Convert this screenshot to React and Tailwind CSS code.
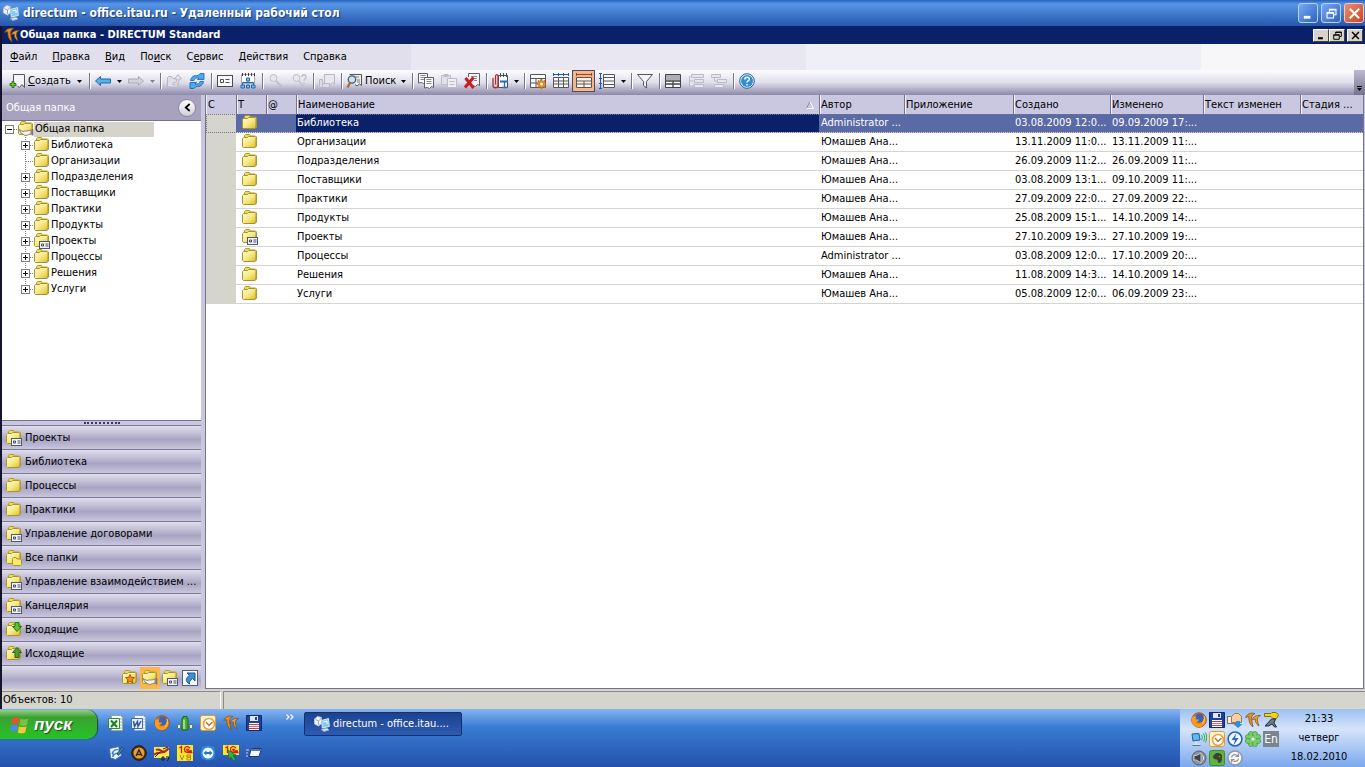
import { useState } from "react";

const FOLDERS = [
  { name: "Библиотека", author: "Administrator ...", created: "03.08.2009 12:0...", changed: "09.09.2009 17:..." },
  { name: "Организации", author: "Юмашев Ана...", created: "13.11.2009 11:0...", changed: "13.11.2009 11:...", leaf: true },
  { name: "Подразделения", author: "Юмашев Ана...", created: "26.09.2009 11:2...", changed: "26.09.2009 11:..." },
  { name: "Поставщики", author: "Юмашев Ана...", created: "03.08.2009 13:1...", changed: "09.10.2009 11:..." },
  { name: "Практики", author: "Юмашев Ана...", created: "27.09.2009 22:0...", changed: "27.09.2009 22:..." },
  { name: "Продукты", author: "Юмашев Ана...", created: "25.08.2009 15:1...", changed: "14.10.2009 14:..." },
  { name: "Проекты", author: "Юмашев Ана...", created: "27.10.2009 19:3...", changed: "27.10.2009 19:...", kind: "card" },
  { name: "Процессы", author: "Administrator ...", created: "03.08.2009 12:0...", changed: "17.10.2009 20:..." },
  { name: "Решения", author: "Юмашев Ана...", created: "11.08.2009 14:3...", changed: "14.10.2009 14:..." },
  { name: "Услуги", author: "Юмашев Ана...", created: "05.08.2009 12:0...", changed: "06.09.2009 23:..." },
];

const SHORTCUTS = [
  ["Проекты", "card"],
  ["Библиотека", "plain"],
  ["Процессы", "plain"],
  ["Практики", "plain"],
  ["Управление договорами", "card"],
  ["Все папки", "nested"],
  ["Управление взаимодействием ...", "card"],
  ["Канцелярия", "card"],
  ["Входящие", "in"],
  ["Исходящие", "out"],
];

// Each entry: text before the accelerator, the accelerator, the rest.
const MENU = [
  ["", "Ф", "айл"],
  ["", "П", "равка"],
  ["", "В", "ид"],
  ["По", "и", "ск"],
  ["С", "е", "рвис"],
  ["", "Д", "ействия"],
  ["Сп", "р", "авка"],
];

/* ---------- icons ---------- */

function Svg({ children, size = "h-4 w-4" }) {
  return (
    <svg viewBox="0 0 16 16" className={`${size} shrink-0`} fill="none" aria-hidden="true">
      {children}
    </svg>
  );
}

function Folder({ kind = "plain" }) {
  return (
    <Svg>
      <defs>
        <linearGradient id="folderFill" x1="0" y1="0" x2="1" y2="1">
          <stop offset="0" stopColor="#fffcd0" />
          <stop offset="0.5" stopColor="#f6e987" />
          <stop offset="1" stopColor="#dcbb25" />
        </linearGradient>
      </defs>
      <path d="M2.500 3.500V1.500l1-1h4l1 1.500h5l1 1v9l-1 1h-11z" fill="#ecd968" stroke="#b09d2e" />
      <path d="M.5 4.500l1-1h4l1-1h6.500l1 1v8.500l-1 1.500H1.500l-1-1z" fill="url(#folderFill)" stroke="#a8952a" />
      {kind === "card" && (
        <>
          <rect x="5.500" y="8.500" width="10" height="7" fill="#f2f2fa" stroke="#55576b" />
          <path d="M7.500 11h2v2h-2z" stroke="#444a68" />
          <path d="M11.500 11h3M11.500 13h3" stroke="#444a68" />
        </>
      )}
      {kind === "nested" && (
        <path d="M6.500 9.500V8.500l1-1h2.500l1 1.500h3.500l1 1v4.500l-1 1h-7l-1-1z" fill="#f7e774" stroke="#a8952a" />
      )}
      {kind === "in" && (
        <path d="M9 .5h4v4h2.500L11 9.500 6.500 4.500H9z" fill="#55c62e" stroke="#23751b" />
      )}
      {kind === "out" && (
        <path d="M9 11.500h4v-5h2.500L11 1.500 6.500 6.500H9z" fill="#4f9a3c" stroke="#23641b" />
      )}
      {kind === "star" && (
        <path d="M8 4.500l1.300 2.800 3.200.3-2.400 2.200.8 3.200L8 11.300 5.100 13l.8-3.200-2.400-2.200 3.200-.3z" fill="#f08a1c" stroke="#b25409" />
      )}
      {kind === "shared" && (
        <>
          <path d="M1 8.500l4 2c2-1 5 0 8-1.500v4c-2 0-3 1.500-6 1.500L3 12z" fill="#f4f1ea" stroke="#8b8575" />
          <path d="M14.500 8v6.500" stroke="#77778b" strokeWidth="1.800" />
        </>
      )}
    </Svg>
  );
}

function Computer() {
  return (
    <Svg>
      <path d="M7.500 4.500l7-2 .8 8-7 1.500z" fill="#7fcbf5" stroke="#d9eaf8" />
      <path d="M7 13.500l6-1.500 2 2-5 1.500z" fill="#dfe7ef" stroke="#8fa5bf" />
      <path d="M.5 3l3-2.500 4 1v6l-3 2.500-4-2z" fill="#f2f5f9" stroke="#b8c4d4" />
      <path d="M1.500 3.500l3 1.500v4M4.500 5l3-3" stroke="#94a8c0" />
      <path d="M9.500 6l3.500-1v3" stroke="#fff" />
    </Svg>
  );
}

function Directum() {
  return (
    <Svg>
      <path d="M.7 5.500C2 1.500 6 .5 10 1.500 7 2.500 6 5 6.800 8.500L8 15C5 13 3.500 9 3.800 4.800 2.500 4.800 1.500 5 .7 5.500z" fill="#e48f25" stroke="#7c4812" strokeWidth=".7" />
      <path d="M7.500 8c.5-3.500 4-5 8-4.500-2.500 1-3.500 2.500-3 5.500l1.500 5c-2.500-1.500-4-4-3.700-7-1.200 0-2 .3-2.800 1z" fill="#e9a03a" stroke="#7c4812" strokeWidth=".7" />
    </Svg>
  );
}

function Floppy() {
  return (
    <Svg>
      <path d="M.5.5h15v15H.5z" fill="#1d3f9f" stroke="#142766" />
      <path d="M4 1h8v5H4z" fill="#dfe6f4" />
      <path d="M9 2h2v3H9z" fill="#1d3f9f" />
      <path d="M3 8h10v7H3z" fill="#fff" />
      <path d="M3 9.500h10M3 13.500h10" stroke="#cf3a3a" />
      <path d="M3 11.500h10" stroke="#d87070" />
    </Svg>
  );
}

function Firefox() {
  return (
    <Svg>
      <circle cx="8" cy="8" r="7.300" fill="#e8751a" stroke="#a3430c" strokeWidth=".8" />
      <circle cx="8.500" cy="6" r="4.500" fill="#3b64b8" />
      <path d="M1.500 4c1 1 2 .5 4 .5L4.500 7c1 1 3 0 3.500 1-1 2-3 1.500-3.500 2.500 3 2.500 7 1 8-3l1-3c2 4 1 9-4 10.500C4 16 0 12 1 7z" fill="#f59b1d" />
      <path d="M13 4c1 3 .5 6-2 7.500" stroke="#ffd34f" />
    </Svg>
  );
}

function Outlook() {
  return (
    <Svg>
      <rect x=".5" y=".5" width="15" height="15" rx="2" fill="#fff3c9" stroke="#e09a2d" />
      <circle cx="9" cy="9" r="5.500" fill="#fff" stroke="#e5a03c" strokeWidth="1.500" />
      <path d="M6 7l3 3.500L12.500 7" stroke="#b6741e" strokeWidth="1.300" />
    </Svg>
  );
}

function Excel() {
  return (
    <Svg>
      <path d="M3.500.5h9l2 2v13h-11z" fill="#fff" stroke="#94a894" />
      <path d="M10 4h4M10 7h4M10 10h4M10 13h4" stroke="#8fc08f" />
      <path d="M.5 3.500h11v10H.5z" fill="#e7f6e7" stroke="#2e8b3a" />
      <path d="M3 5.500l6 6.500M9 5.500L3 12" stroke="#1f7c2e" strokeWidth="2" />
    </Svg>
  );
}

function Word() {
  return (
    <Svg>
      <path d="M3.500.5h9l2 2v13h-11z" fill="#fff" stroke="#8fa0c4" />
      <path d="M10 4h4M10 7h4M10 10h4M10 13h4" stroke="#9db4e0" />
      <path d="M.5 3.500h11v10H.5z" fill="#eaf1fd" stroke="#4069b5" />
      <path d="M2.500 6l1 5.500 3-5 .5 5L10 6" stroke="#2b55a8" strokeWidth="1.500" />
    </Svg>
  );
}

function Battery() {
  return (
    <Svg>
      <path d="M6 1.500h4v2h1v11.500H5V3.500h1z" fill="#49ad35" stroke="#236b17" />
      <path d="M7 4.500v9.500" stroke="#b6f09a" strokeWidth="1.500" />
      <path d="M.5 9.500h3v4h-3zM12.500 9.500h3v4h-3z" fill="#e2eae2" stroke="#5b7b63" />
    </Svg>
  );
}

function Notes() {
  return (
    <Svg>
      <path d="M1.500 3.500l9-2 3 9-6 4-5-1.500z" fill="#eaf4ff" stroke="#376fa9" />
      <path d="M4 9c1-4 4-5 7-4M4.500 11.500c2-3 4-4 7-3M5 6v6" stroke="#387fbf" strokeWidth="1.300" />
      <path d="M9 9l5-7 1.500 1.500-5 7z" fill="#4f80b0" stroke="#244d77" />
    </Svg>
  );
}

function RoundA() {
  return (
    <Svg>
      <circle cx="8" cy="8" r="7.300" fill="#43321b" stroke="#24180a" />
      <circle cx="8" cy="8" r="5.500" fill="#e9a32c" />
      <path d="M5 11l3-6 3 6M6 9.500h4" stroke="#3a260b" strokeWidth="1.500" />
    </Svg>
  );
}

function Seven() {
  return (
    <Svg>
      <path d="M0 2h15v11H0z" fill="#ffe94a" />
      <path d="M0 10C4 5 8 11 15 3M2 5c4-2 6 3 9 2" stroke="#a82929" strokeWidth="2" />
      <path d="M1 12l5-5M9 4l5-2" stroke="#282828" />
      <path d="M8 12h2v3H8zM12 12h3l-1.500 4" stroke="#171717" />
    </Svg>
  );
}

function OneC({ arrow }) {
  return (
    <Svg>
      <path d={arrow ? "M0 0h16v10H0z" : "M0 0h16v16H0z"} fill="#ffe42e" />
      <path d="M2.500 3L4.500 1.500V8M13 3C11 .5 7.500 1.500 7.500 4.500s2 3 8 3M12 4.500c-3-1.500-3 1.500 0 1.500h3" stroke="#d41d16" strokeWidth="1.300" />
      {arrow ? (
        <path d="M5 5l8 5-3 .5 2.500 4-2 1.500-2.500-4L6 14z" fill="#35b33c" stroke="#1b6b22" strokeWidth=".7" />
      ) : (
        <path d="M3 10l2 5 2-5M10 10h3.500v2H10zM10 12.500h3.500V15H10z" stroke="#b38a0f" />
      )}
    </Svg>
  );
}

function Viewer() {
  return (
    <Svg>
      <path d="M2 2l6-1.500L14 2l1.500 6-1.500 6-6 1.500L2 14 .5 8z" fill="#2e88d6" />
      <circle cx="8" cy="8" r="5.500" fill="#f1f8ff" />
      <path d="M3.500 8l3-2.500v1.500h3V5.500l3 2.500-3 2.500V9h-3v1.500z" fill="#1f75c5" />
    </Svg>
  );
}

function RunWindow() {
  return (
    <Svg>
      <path d="M5.500 3.500h10l-2.500 8H3z" fill="#f3f7fc" stroke="#26385c" />
      <path d="M5.500 5h9.500" stroke="#4979c6" strokeWidth="2" />
      <path d="M0 5h3M0 8h2M0 11h2" stroke="#c3d5f0" />
    </Svg>
  );
}

function FlagWin() {
  return (
    <Svg size="h-5 w-5">
      <path d="M2 2.500c2-1 4-1 5.500 0L6.500 7.500C5 6.500 3 6.500 1 7.500z" fill="#e8532a" />
      <path d="M8.500 2.800c2 1 4 1 6 0L13.500 8c-2 1-4 1-6 0z" fill="#7cc242" />
      <path d="M.8 8.500c2-1 4-1 5.500 0L5.200 13.500c-1.500-1-3.500-1-5.200 0z" fill="#4b8be8" />
      <path d="M7.200 8.900c2 1 4 1 6 0l-1 5c-2 1-4 1-6 0z" fill="#f8c832" />
    </Svg>
  );
}

function Clip16() {
  return (
    <Svg>
      <rect x=".5" y="4.500" width="8" height="7" fill="#ededf2" stroke="#8e6d4c" />
      <path d="M4.500 4.500l3-3h4l3 3v6h-10z" fill="#f3cfa6" stroke="#b2713a" />
      <path d="M9 9h4v3h2.500L11 16l-4.500-4H9z" fill="#2891dd" />
    </Svg>
  );
}

function Key() {
  return (
    <Svg>
      <path d="M1.500 1.500H8l1-1h4l2.500 2.500-2 3.500H10L8 4.500H1.500z" fill="#f2d21c" stroke="#84710b" />
      <path d="M8.500 7h4l-1.500 4 2.500 4h-2l-2.500-3-3.500 2H2z" fill="#6f7983" stroke="#252c33" />
    </Svg>
  );
}

function NetWave() {
  return (
    <Svg>
      <path d="M1 3l7-.5 1 6.500-7 1z" fill="#63b6ee" stroke="#235f98" />
      <path d="M5 10v3M2 13.500h7" stroke="#d3e1ef" strokeWidth="2" />
      <path d="M1.500 14.500h8" stroke="#4d78a3" />
      <path d="M10.500 4c1 1.500 1 3 0 5M12.500 2.500c1.500 2.500 1.500 5 0 8M14.500 1.500c1.500 3 1.500 7 0 10" stroke="#2fae42" />
    </Svg>
  );
}

function Bolt() {
  return (
    <Svg>
      <circle cx="8" cy="8" r="6.900" fill="#f2f7ff" stroke="#2b61b5" strokeWidth="1.500" />
      <path d="M9.500 2L4.500 9H8l-1.500 5.500L11.500 7H8z" fill="#2668c8" />
    </Svg>
  );
}

function Flower() {
  return (
    <Svg>
      <g fill="#7ccb6c" stroke="#35913a" strokeWidth=".6">
        <circle cx="6" cy="3" r="2.600" />
        <circle cx="10" cy="3" r="2.600" />
        <circle cx="6" cy="13" r="2.600" />
        <circle cx="10" cy="13" r="2.600" />
        <circle cx="3" cy="6" r="2.600" />
        <circle cx="3" cy="10" r="2.600" />
        <circle cx="13" cy="6" r="2.600" />
        <circle cx="13" cy="10" r="2.600" />
      </g>
      <path d="M8 8L5 4M8 8l3-4M8 8L4 5M8 8l-4 3M8 8l4-3M8 8l4 3M8 8l-3 4M8 8l3 4" stroke="#7ccb6c" strokeWidth="2" />
      <circle cx="8" cy="8" r="1.500" fill="#e7f6d4" />
    </Svg>
  );
}

function Speaker() {
  return (
    <Svg>
      <circle cx="8" cy="8" r="7" fill="#8d929b" stroke="#5b616a" />
      <path d="M3 5.500h2.500L10 3v10L5.500 10H3z" fill="#3d4149" stroke="#c6cad1" />
      <path d="M11.500 5.500c1.500 1.500 1.500 3.500 0 5" stroke="#f0f1f4" />
    </Svg>
  );
}

function Evernote() {
  return (
    <Svg>
      <rect x=".5" y=".5" width="15" height="15" rx="2" fill="#62b33d" stroke="#468b2c" />
      <path d="M4 6l3-3c3 0 6 .5 6 3 0 3 0 7-2.500 7-2 0-2-2-1-2.500-2 .5-2-1-2-1.500-2 1-3.500-.5-3.500-3z" fill="#3b4238" />
      <circle cx="10.500" cy="6.500" r=".8" fill="#62b33d" />
    </Svg>
  );
}

function Sync() {
  return (
    <Svg>
      <circle cx="8" cy="8" r="7" fill="#f7f7f9" stroke="#93979f" strokeWidth="1.500" />
      <path d="M4.500 7.500C5 4.500 9 3.500 11 6M11.500 3.500V6.500H8.500M11.500 8.500C11 11.500 7 12.500 5 10M4.500 12.500v-3h3" stroke="#8b9099" strokeWidth="1.200" />
    </Svg>
  );
}

/* toolbar glyphs, drawn on the same 16px grid */
const GLYPHS = {
  create: (
    <>
      <path d="M4.500 8V1.500h11v13l-2.500-3-2.500 3-2-1.500" fill="#f4f4f8" stroke="#55565c" />
      <path d="M3 8.500h2v2h2v2H5v2H3v-2H1v-2h2z" fill="#66c636" stroke="#2e7a1c" />
    </>
  ),
  back: <path d="M.5 8l5-4.500v2.500h10v4h-10v2.500z" fill="#57b2ec" stroke="#1f65a8" />,
  forward: <path d="M15.500 8l-5-4.500v2.500H.5v4h10v2.500z" fill="#d3d2dc" stroke="#a9a8b4" />,
  up: (
    <>
      <path d="M1.500 4.500l1-1h3l1.500 2h5v8.500h-10.500z" fill="#dfdee7" stroke="#b6b5c2" />
      <path d="M7 10c3 0 4-1 4-4H8.500L12 1.500 15.500 6H13c0 4-2 6-6 6z" fill="#e7e6ee" stroke="#b6b5c2" />
    </>
  ),
  refresh: (
    <>
      <path d="M1.500 7.500C2 4 5 2 9 2.500l2-2h4v6H8.500l1.500-1.500C7 4.500 5.500 5.500 5 7.500z" fill="#4aaaf0" stroke="#1a5faa" strokeWidth=".8" />
      <path d="M14.500 8.500C14 12 11 14 7 13.500l-2 2H1v-6h6.500L6 11c3 .5 4.500-.5 5-2.500z" fill="#4aaaf0" stroke="#1a5faa" strokeWidth=".8" />
    </>
  ),
  card: (
    <>
      <rect x=".5" y="2.500" width="15" height="11" fill="#fafafc" stroke="#4c4c54" />
      <path d="M3.500 6.500h3v3h-3zM8.500 6.500h4M8.500 9.500h4" stroke="#4c4c54" />
    </>
  ),
  org: (
    <>
      <path d="M1.500 1.500h13v9h-13z" fill="#fff" stroke="#a8a8b4" />
      <path d="M2.500 0v3M5.500 0v3M8.500 0v3M11.500 0v3M14.500 0v3" stroke="#3c3c44" />
      <path d="M8 7v3M2.500 12V9.500h11V12" stroke="#2667a8" />
      <path d="M6.500 5h3v3h-3zM1 12h3.500v3H1zM6.500 12h3v3h-3zM11.500 12H15v3h-3.500z" fill="#6fc0f4" stroke="#2667a8" />
    </>
  ),
  find: (
    <>
      <circle cx="5.500" cy="5" r="3.500" fill="#e7e6ee" stroke="#c0bfcb" />
      <path d="M8 8l6 6" stroke="#c0bfcb" strokeWidth="2" />
    </>
  ),
  findNext: (
    <>
      <circle cx="5.500" cy="5" r="3.500" fill="#e7e6ee" stroke="#c0bfcb" />
      <path d="M8 8l5 6M11 4c0-3 4-3 4 0 0 2-2 1.500-2 4M13 9.500V11" stroke="#c0bfcb" strokeWidth="1.500" />
    </>
  ),
  stack: (
    <>
      <path d="M5.500 1.500h10v9l-2-1-2 2-2-1h-4z" fill="#e9e8f0" stroke="#b9b8c4" />
      <path d="M.5 6.500h3v8h-3zM3.500 10.500h7v4h-7z" fill="#dddce6" stroke="#b9b8c4" />
    </>
  ),
  search: (
    <>
      <path d="M3.500 1.500h12v11l-2-1.500-2.500 2-2-1.500" fill="#eee" stroke="#55565c" />
      <path d="M8 4h5M11 7h3M11 9h3" stroke="#77787e" />
      <circle cx="6" cy="6.500" r="3.700" fill="#c9e5f4" stroke="#50565f" strokeWidth="1.300" />
      <path d="M4 10l-2.500 4.500" stroke="#b66a32" strokeWidth="2.500" />
    </>
  ),
  copy: (
    <>
      <path d="M.5.500h9v9l-2-1-2 2-2-1-3 .5z" fill="#fafafc" stroke="#5d5e66" />
      <path d="M2.500 2.500h5M2.500 4.500h5M2.500 6.500h5" stroke="#85868e" />
      <path d="M6.500 4.500h9v10l-2-1-2 2-2-1-3 .5z" fill="#fafafc" stroke="#5d5e66" />
      <path d="M8.500 6.500h5M8.500 8.500h5M8.500 10.500h5" stroke="#85868e" />
    </>
  ),
  paste: (
    <>
      <path d="M.5 2.500h9v9h-9z" fill="#e2e1ea" stroke="#bcbbc6" />
      <path d="M3 1.500h4v2H3z" stroke="#bcbbc6" />
      <path d="M6.500 5.500h9v9h-9zM8.500 8.500h5M8.500 11.500h5" fill="#efeef4" stroke="#bcbbc6" />
    </>
  ),
  remove: (
    <>
      <path d="M4.500 4V.5h11v12l-2-1-2 2-3-1" fill="#f6f6fa" stroke="#5d5e66" />
      <path d="M7 3.500h6M9 5.500h4M10 7.500h3" stroke="#85868e" />
      <path d="M1.500 5l8 10M9.500 4.500L1 14.500" stroke="#cc1c1c" strokeWidth="3" />
    </>
  ),
  attach: (
    <>
      <path d="M6.500 2.500h9v12h-9zM8.500 0v4M11.500 0v4M14.500 0v4" fill="#fafafc" stroke="#4c4c54" />
      <path d="M1 5v7.500c0 3 5 3 5 0V3.500C6 1 3.500 1 3.500 3.500v8" stroke="#a83232" strokeWidth="1.300" />
      <path d="M8 8.500h8" stroke="#276db3" strokeWidth="2" />
      <path d="M12.500 9v5M10 14.500h5" stroke="#276db3" strokeWidth="1.300" />
    </>
  ),
  tableGear: (
    <>
      <path d="M.5 1.500h15v13H.5zM.5 5.500h15M.5 10h15M6 5v9M11 5v9" fill="#fafafc" stroke="#55565c" />
      <path d="M11.500 6v10M6.500 11h10M8 7.500l7 7M15 7.500l-7 7" stroke="#c87417" strokeWidth="1.800" />
      <circle cx="11.500" cy="11" r="2.500" fill="#fff" stroke="#dc8b25" strokeWidth="2" />
    </>
  ),
  fitColumns: (
    <>
      <path d="M.5 4.500h15v10H.5zM.5 8h15M.5 11h15M5.500 5v9M10.500 5v9" fill="#fafafc" stroke="#55565c" />
      <path d="M0 1.500h16M.5 0v3M5.500 0v3M10.500 0v3M15.500 0v3" stroke="#2159a3" />
    </>
  ),
  fitWidth: (
    <>
      <path d="M.5 4.500h15v10H.5zM.5 8h15M.5 11h15M8 8v6" fill="#fff4e4" stroke="#55565c" />
      <path d="M0 1.500h16M.5 0v3M15.500 0v3" stroke="#a83a2e" />
    </>
  ),
  rowHeight: (
    <>
      <path d="M4.500 1.500h11v13h-11zM4.500 4.500h11M4.500 8h11M4.500 11.500h11" fill="#fafafc" stroke="#55565c" />
      <path d="M1.500 0v16M0 .5h3M0 5.500h3M0 10.500h3M0 15.500h3" stroke="#2159a3" />
    </>
  ),
  filter: <path d="M.5 1.500h15l-6 7v6.500l-3-2.500v-4z" fill="#f4f4f8" stroke="#55565c" />,
  preview: (
    <>
      <path d="M.5 1.500h15v13H.5z" fill="#fafafc" stroke="#44454b" />
      <path d="M1 2h14v5H1z" fill="#aeaeb8" />
      <path d="M.5 8h15M.5 11h15M8 8v6" stroke="#44454b" strokeWidth="1.300" />
    </>
  ),
  tree1: <path d="M3.500 1.500h12v3h-12zM6.500 6.500h9v3h-9zM6.500 11.500h9v3h-9zM1.500 3v10h4M1.500 8h4" fill="#e7e6ee" stroke="#bab9c6" />,
  tree2: <path d="M.5 1.500h9v3h-9zM6.500 6.500h9v3h-9zM3.500 11.500h9v3h-9zM3.500 5v3h3" fill="#e7e6ee" stroke="#bab9c6" />,
  help: (
    <>
      <circle cx="8" cy="8" r="7.300" fill="#f2f8fd" stroke="#2a5c94" />
      <circle cx="8" cy="8" r="6" fill="#2c8fd8" />
      <path d="M5.800 6.500c0-3 4.500-3 4.500-.3C10.300 8 8 7.800 8 9.500M8 11v1.500" stroke="#fff" strokeWidth="1.500" />
    </>
  ),
};

/* ---------- toolbar parts ---------- */

function Tool({ icon, label, active, disabled }) {
  return (
    <button
      type="button"
      aria-label={label}
      disabled={disabled}
      className={`flex h-[22px] w-[23px] shrink-0 items-center justify-center ${
        active ? "border border-[#4a4a6a] bg-[#f5b884]" : ""
      }`}
    >
      <Svg>{GLYPHS[icon]}</Svg>
    </button>
  );
}

function Caret({ dim }) {
  return (
    <svg viewBox="0 0 5 3" className={`h-[3px] w-[5px] shrink-0 ${dim ? "text-[#85838f]" : "text-black"}`} aria-hidden="true">
      <path d="M0 0h5L2.500 3z" fill="currentColor" />
    </svg>
  );
}

function Drop({ label, dim }) {
  return (
    <button type="button" aria-label={label} className="flex h-[22px] w-[10px] shrink-0 items-center justify-center">
      <Caret dim={dim} />
    </button>
  );
}

function Sep() {
  return <span className="mr-px ml-[3px] h-4 w-px shrink-0 bg-[#77748f] shadow-[1px_0_0_#fff]" />;
}

function Toolbar() {
  return (
    <div className="flex h-[25px] items-stretch bg-linear-to-b from-[#fdfdfe] via-[#e0dfec] to-[#8d89a8]">
      <div className="flex grow items-center overflow-hidden pb-[3px] pl-[4px]">
        <button type="button" className="flex shrink-0 items-center">
          <span className="flex w-[22px] justify-center">
            <Svg>{GLYPHS.create}</Svg>
          </span>
          <span className="w-11 text-left">
            <u>С</u>оздать
          </span>
          <span className="flex w-[14px] justify-center">
            <Caret />
          </span>
        </button>
        <Sep />
        <Tool icon="back" label="Назад" />
        <Drop label="Назад: список" />
        <Tool icon="forward" label="Вперед" disabled />
        <Drop label="Вперед: список" dim />
        <Sep />
        <Tool icon="up" label="На уровень вверх" disabled />
        <Tool icon="refresh" label="Обновить" />
        <Sep />
        <Tool icon="card" label="Карточка" />
        <Tool icon="org" label="Структура" />
        <Sep />
        <Tool icon="find" label="Найти" disabled />
        <Tool icon="findNext" label="Найти далее" disabled />
        <Sep />
        <Tool icon="stack" label="Задачи" disabled />
        <Sep />
        <button type="button" className="flex shrink-0 items-center">
          <span className="flex w-[22px] justify-center">
            <Svg>{GLYPHS.search}</Svg>
          </span>
          <span className="w-8 text-left">Поиск</span>
          <span className="flex w-3 justify-center">
            <Caret />
          </span>
        </button>
        <Sep />
        <Tool icon="copy" label="Копировать" />
        <Tool icon="paste" label="Вставить" disabled />
        <Tool icon="remove" label="Удалить" />
        <Sep />
        <Tool icon="attach" label="Вложения" />
        <Drop label="Вложения: список" />
        <Sep />
        <Tool icon="tableGear" label="Настройка таблицы" />
        <Tool icon="fitColumns" label="Ширина колонок" />
        <Tool icon="fitWidth" label="По ширине окна" active />
        <Tool icon="rowHeight" label="Высота строк" />
        <Drop label="Высота строк: список" />
        <Sep />
        <Tool icon="filter" label="Фильтр" />
        <Sep />
        <Tool icon="preview" label="Просмотр" />
        <Tool icon="tree1" label="Развернуть" disabled />
        <Tool icon="tree2" label="Свернуть" disabled />
        <Sep />
        <Tool icon="help" label="Помощь" />
      </div>
      <button
        type="button"
        aria-label="Другие кнопки"
        className="flex w-[11px] shrink-0 flex-col items-center justify-end gap-px bg-linear-to-b from-[#bdbbd0] to-[#77738f] pb-1"
      >
        <span className="h-px w-[5px] bg-black" />
        <Caret />
      </button>
    </div>
  );
}

/* ---------- window frames ---------- */

function WindowGlyph({ kind, size }) {
  return (
    <Svg size={size}>
      {kind === "min" && <path d="M3 12h7" stroke="currentColor" strokeWidth="3" />}
      {kind === "restore" && (
        <path d="M5.500 6V3h8v6.500H11M2.500 7h8v6.500h-8zM5 3.500h9M2 7.500h9" stroke="currentColor" strokeWidth="1.400" />
      )}
      {kind === "close" && <path d="M3 3l10 10M13 3L3 13" stroke="currentColor" strokeWidth="2.200" />}
    </Svg>
  );
}

function RemoteTitle() {
  return (
    <header className="flex h-[26px] items-center bg-linear-to-b from-[#2a62bd] via-[#5796e6] via-15% to-[#2656ab] pr-px pl-[3px] text-white">
      <Computer />
      <h1 className="ml-1 grow truncate text-[12px] font-bold [text-shadow:1px_1px_1px_#16387a]">
        directum - office.itau.ru - Удаленный рабочий стол
      </h1>
      <div className="flex gap-[3px]">
        <button type="button" aria-label="Свернуть окно" className="flex h-5 w-5 items-center justify-center rounded-[3px] border border-[#b9d3fa] bg-linear-to-br from-[#77aaf2] to-[#2e63c0]">
          <WindowGlyph kind="min" size="h-[15px] w-[15px]" />
        </button>
        <button type="button" aria-label="Восстановить окно" className="flex h-5 w-5 items-center justify-center rounded-[3px] border border-[#b9d3fa] bg-linear-to-br from-[#77aaf2] to-[#2e63c0]">
          <WindowGlyph kind="restore" size="h-[13px] w-[13px]" />
        </button>
        <button type="button" aria-label="Закрыть окно" className="flex h-5 w-5 items-center justify-center rounded-[3px] border border-[#f4c9bd] bg-linear-to-br from-[#ec8d72] to-[#c8431f]">
          <WindowGlyph kind="close" size="h-[15px] w-[15px]" />
        </button>
      </div>
    </header>
  );
}

function AppTitle() {
  return (
    <div className="flex h-[18px] items-center bg-[#0a216a] pr-[2px] pl-[2px] text-white">
      <Directum />
      <h2 className="grow truncate font-bold">Общая папка - DIRECTUM Standard</h2>
      <div className="flex text-black">
        {[
          ["min", "Свернуть"],
          ["restore", "Восстановить"],
          ["close", "Закрыть"],
        ].map(([kind, label]) => (
          <button
            key={kind}
            type="button"
            aria-label={label}
            className="flex h-[13px] w-4 items-center justify-center border border-t-white border-r-[#404040] border-b-[#404040] border-l-white bg-[#d6d3cb] last:ml-[2px]"
          >
            <WindowGlyph kind={kind} size="h-[11px] w-[11px]" />
          </button>
        ))}
      </div>
    </div>
  );
}

function MenuBar() {
  return (
    <nav className="flex h-[26px] items-center gap-[15px] bg-[linear-gradient(to_right,#e1dfeb_30%,#e9e8f2_30%,#e9e8f2_59%,#efeff7_59%,#efeff7_88%,#f7f7f9_88%)] pl-[8px]">
      {MENU.map(([before, key, after]) => (
        <button key={before + key} type="button">
          {before}
          <u>{key}</u>
          {after}
        </button>
      ))}
    </nav>
  );
}

/* ---------- left panel ---------- */

function Expander({ open, leaf, last }) {
  return (
    <svg viewBox="0 0 13 16" className="h-4 w-[13px] shrink-0" fill="none" aria-hidden="true">
      {!open && <path d={last ? "M4.500 0v8" : "M4.500 0v16"} stroke="#808080" strokeDasharray="1 1" />}
      <path d="M5 8.500h8" stroke="#808080" strokeDasharray="1 1" />
      {!leaf && (
        <>
          <rect x=".5" y="4.500" width="8" height="8" fill="#fff" stroke="#808080" />
          <path d={open ? "M2 8.500h5" : "M2 8.500h5M4.500 6v5"} stroke="#000" />
        </>
      )}
    </svg>
  );
}

function Sidebar() {
  return (
    <aside className="flex w-[199px] shrink-0 flex-col">
      <div className="flex h-[26px] items-center justify-between border-b border-[#77738f] bg-[#a8a2bf] pr-[5px] pl-[4px] text-white">
        <span>Общая папка</span>
        <button type="button" aria-label="Скрыть панель" className="flex h-[18px] w-[18px] items-center justify-center rounded-full border border-[#8b879c] bg-linear-to-b from-white to-[#d0ceda] text-black">
          <svg viewBox="0 0 8 10" className="h-[9px] w-[7px]" fill="none" aria-hidden="true">
            <path d="M6.500 1L2 5l4.500 4" stroke="currentColor" strokeWidth="2" />
          </svg>
        </button>
      </div>
      <div className="grow bg-white pl-[3px]">
        <button type="button" className="flex h-4 items-center">
          <Expander open />
          <Folder kind="shared" />
          <span className="h-[15px] w-[120px] bg-[#d6d3cb] pl-px text-left">Общая папка</span>
        </button>
        <ul className="pl-4">
          {FOLDERS.map((f, i) => (
            <li key={f.name}>
              <button type="button" className="flex h-4 items-center">
                <Expander leaf={f.leaf} last={i === FOLDERS.length - 1} />
                <Folder kind={f.kind} />
                <span className="pl-px">{f.name}</span>
              </button>
            </li>
          ))}
        </ul>
      </div>
      <div className="flex h-[5px] items-center justify-center border-t border-[#77738f] bg-[#c9c6df]">
        <span className="w-9 border-t-2 border-dotted border-[#3c3a58]" />
      </div>
      <ul>
        {SHORTCUTS.map(([name, kind]) => (
          <li key={name}>
            <button
              type="button"
              className="flex h-6 w-full items-center gap-[3px] border-t border-[#7d7998] bg-linear-to-b from-[#e0deec] via-[#a8a4c2] via-60% to-[#c9c6de] pl-1"
            >
              <Folder kind={kind} />
              <span className="truncate">{name}</span>
            </button>
          </li>
        ))}
      </ul>
      <div className="flex h-6 items-center justify-end border-t border-[#7d7998] bg-linear-to-b from-[#e0deec] via-[#aca8c5] via-60% to-[#c9c6de] pr-px">
        <button type="button" aria-label="Избранное" className="flex h-5 w-5 items-center justify-center">
          <Folder kind="star" />
        </button>
        <button type="button" aria-label="Общая папка" className="flex h-[22px] w-5 items-center justify-center bg-[#fbb64d]">
          <Folder kind="shared" />
        </button>
        <button type="button" aria-label="Компоненты" className="flex h-5 w-5 items-center justify-center">
          <Folder kind="card" />
        </button>
        <button type="button" aria-label="Ссылки" className="flex h-5 w-5 items-center justify-center">
          <Svg>
            <rect x=".5" y=".5" width="15" height="15" fill="#fafcff" stroke="#4d5f80" />
            <path d="M5 3h8v8l-2.500-2.500C8 10 7 12 7.500 14 2.500 11 4 7.500 7.500 5.500z" fill="#3d92d8" stroke="#1d5594" />
          </Svg>
        </button>
      </div>
    </aside>
  );
}

/* ---------- list ---------- */

function Th({ children }) {
  return (
    <th className="border-l border-[#77738f] pl-px text-left font-normal shadow-[inset_1px_0_0_#f1f0f8] first:border-l-0 first:pl-[2px]">
      {children}
    </th>
  );
}

function FolderTable({ selected, onSelect }) {
  return (
    <main className="mr-px grow border-r border-b border-l border-[#77738f] bg-white">
      <table className="w-full table-fixed border-separate border-spacing-0 whitespace-nowrap">
        <colgroup>
          <col className="w-[30px]" />
          <col className="w-[30px]" />
          <col className="w-[30px]" />
          <col />
          <col className="w-[85px]" />
          <col className="w-[109px]" />
          <col className="w-[97px]" />
          <col className="w-[93px]" />
          <col className="w-[97px]" />
          <col className="w-[63px]" />
        </colgroup>
        <thead>
          <tr className="h-[19px] bg-[#cac7e1]">
            <Th>С</Th>
            <Th>Т</Th>
            <Th>@</Th>
            <Th>
              <span className="flex items-center justify-between pr-[5px]">
                Наименование
                <svg viewBox="0 0 8 8" className="h-2 w-2" fill="none" aria-hidden="true">
                  <path d="M4 .5L.5 7.500" stroke="#8d8aa5" />
                  <path d="M4 .5l3.500 7H.5" stroke="#fff" />
                </svg>
              </span>
            </Th>
            <Th>Автор</Th>
            <Th>Приложение</Th>
            <Th>Создано</Th>
            <Th>Изменено</Th>
            <Th>Текст изменен</Th>
            <Th>Стадия ...</Th>
          </tr>
        </thead>
        <tbody>
          {FOLDERS.map((f, i) => {
            const on = i === selected;
            return (
              <tr
                key={f.name}
                onClick={() => onSelect(i)}
                className={`h-[19px] ${on ? "bg-[#5a6aa6] text-white outline-1 -outline-offset-1 outline-dotted outline-[#77738f]" : ""}`}
              >
                <td className="bg-[#d6d5cd]" />
                <td className="border-b border-[#d6d5cd] pl-[6px]">
                  <Folder kind={f.kind} />
                </td>
                <td className="border-b border-[#d6d5cd]" />
                <td className={`border-b border-[#d6d5cd] pl-px ${on ? "bg-[#0a216a]" : ""}`}>{f.name}</td>
                <td className="border-b border-[#d6d5cd] pl-[2px]">{f.author}</td>
                <td className="border-b border-[#d6d5cd]" />
                <td className="border-b border-[#d6d5cd] pl-[2px]">{f.created}</td>
                <td className="border-b border-[#d6d5cd] pl-[2px]">{f.changed}</td>
                <td className="border-b border-[#d6d5cd]" />
                <td className="border-b border-[#d6d5cd]" />
              </tr>
            );
          })}
        </tbody>
      </table>
    </main>
  );
}

/* ---------- desktop taskbar ---------- */

const QUICK = [
  ["Excel", <Excel />],
  ["Word", <Word />],
  ["Firefox", <Firefox />],
  ["Питание", <Battery />],
  ["Outlook", <Outlook />],
  ["DIRECTUM", <Directum />],
  ["Диск", <Floppy />],
  ["Заметки", <Notes />],
  ["Аудио", <RoundA />],
  ["1С 7.7", <Seven />],
  ["1С 8", <OneC />],
  ["TeamViewer", <Viewer />],
  ["1С Предприятие", <OneC arrow />],
  ["Выполнить", <RunWindow />],
];

function Taskbar() {
  return (
    <footer className="flex h-[58px] shrink-0 bg-linear-to-b from-[#86b4f2] via-[#3a7dd4] via-30% to-[#2552ad] text-white">
      <button
        type="button"
        className="mt-px flex h-[29px] w-[97px] items-center gap-1 rounded-r-[10px] bg-linear-to-b from-[#8fd088] via-[#39a032] via-25% to-[#22c422] pl-[10px] shadow-[1px_0_1px_#1c4a1c]"
      >
        <FlagWin />
        <span className="font-['Liberation_Sans'] text-[17px] leading-5 font-bold italic [text-shadow:1px_1px_1px_#1d501d]">пуск</span>
      </button>
      <div className="ml-[11px] grid grid-cols-7 gap-x-[7px] gap-y-[14px] self-start pt-[6px]">
        {QUICK.map(([label, icon]) => (
          <button key={label} type="button" aria-label={label} className="h-4 w-4">
            {icon}
          </button>
        ))}
      </div>
      <button type="button" aria-label="Показать все" className="ml-6 flex h-[16px] w-2 items-center">
        <svg viewBox="0 0 8 6" className="h-[6px] w-2" fill="none" aria-hidden="true">
          <path d="M.5.5L3 3 .5 5.500M4.500.5L7 3 4.500 5.500" stroke="#fff" strokeWidth="1.200" />
        </svg>
      </button>
      <button
        type="button"
        className="mt-[3px] ml-[10px] flex h-6 w-[158px] items-center gap-[3px] rounded-[2px] border border-[#14306f] bg-linear-to-b from-[#1d438f] to-[#2b5bb2] pl-[9px]"
      >
        <Computer />
        <span>directum - office.itau....</span>
      </button>
      <div className="grow" />
      <div className="flex w-[185px] bg-linear-to-b from-[#9cc1f2] via-[#d5e4fa] via-35% to-[#7ba8ec] pl-[11px] text-black">
        <div className="grid grid-cols-5 content-start gap-x-[2px] gap-y-[3px] pt-[3px]">
          <Firefox />
          <Floppy />
          <Clip16 />
          <Directum />
          <Key />
          <NetWave />
          <Outlook />
          <Bolt />
          <Flower />
          <span className="flex h-4 w-4 items-center justify-center bg-[#7b8290] text-[12px] text-white">En</span>
          <Speaker />
          <Evernote />
          <Sync />
        </div>
        <div className="flex grow flex-col pr-[6px] text-center leading-[19px]">
          <time>21:33</time>
          <span>четверг</span>
          <span>18.02.2010</span>
        </div>
      </div>
    </footer>
  );
}

export default function App() {
  const [selected, setSelected] = useState(0);

  return (
    <div className="flex min-h-screen flex-col bg-[#c9c6df] font-['DejaVu_Sans_Condensed','DejaVu_Sans',sans-serif] text-[11px] leading-[14px] text-black select-none">
      <RemoteTitle />
      <div className="flex grow flex-col border-l-2 border-[#14142c]">
        <AppTitle />
        <MenuBar />
        <Toolbar />
        <div className="flex grow items-stretch gap-1">
          <Sidebar />
          <FolderTable selected={selected} onSelect={setSelected} />
        </div>
        <div className="flex h-5 shrink-0 gap-[2px] bg-[#d6d5cd] pt-[2px] leading-4">
          <div className="w-[219px] border-t border-r border-t-[#8d8b85] border-r-white pl-px">Объектов: 10</div>
          <div className="grow border-t border-l border-[#8d8b85]" />
        </div>
      </div>
      <Taskbar />
    </div>
  );
}
